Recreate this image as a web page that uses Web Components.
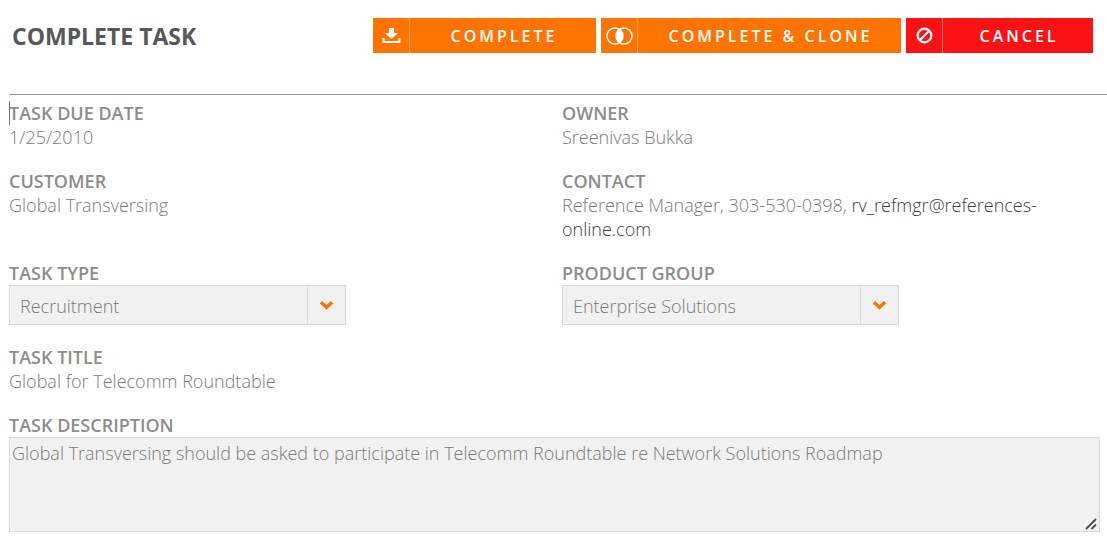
<!DOCTYPE html>
<html lang="en">
<head>
<meta charset="utf-8">
<title>Complete Task</title>
<style>
  body { margin: 0; background: #fff; color: #7c7a7a; font: 300 18px/24px "Open Sans", sans-serif; }
  a { color: #3c4041; text-decoration: none; }
</style>
</head>
<body>
<task-page>
  <task-header slot="header" heading="COMPLETE TASK">
    <action-button icon="download" style="flex: 0 0 223px">COMPLETE</action-button>
    <action-button icon="clone" style="flex: 0 0 300px">COMPLETE &amp; CLONE</action-button>
    <action-button icon="cancel" tone="danger" style="flex: 0 0 187px">CANCEL</action-button>
  </task-header>
  <task-field label="TASK DUE DATE" caret>1/25/2010</task-field>
  <task-field label="OWNER">Sreenivas Bukka</task-field>
  <task-field label="CUSTOMER">Global Transversing</task-field>
  <task-field label="CONTACT">Reference Manager, 303-530-0398, <a href="mailto:rv_refmgr@references-online.com">rv_refmgr@references-online.com</a></task-field>
  <task-select label="TASK TYPE" value="Recruitment"></task-select>
  <task-select label="PRODUCT GROUP" value="Enterprise Solutions"></task-select>
  <task-field label="TASK TITLE" wide>Global for Telecomm Roundtable</task-field>
  <task-notes label="TASK DESCRIPTION" value="Global Transversing should be asked to participate in Telecomm Roundtable re Network Solutions Roadmap" wide></task-notes>
</task-page>
<script>
const labelCss = `.label { display: block; font-weight: 600; color: #8e8c8c; }`;

class Base extends HTMLElement {
  connectedCallback() {
    if (!this.shadowRoot) this.attachShadow({ mode: "open" }).innerHTML = this.render();
  }
  attr(name) { return this.getAttribute(name) || ""; }
}

customElements.define("task-page", class extends Base {
  render() {
    return `<style>
      :host { display: block; padding-left: 9px; }
      main { display: grid; grid-template-columns: 1fr 1fr; column-gap: 8px; row-gap: 20px; padding: 6px 0 8px; border-top: 1px solid #969494; }
      ::slotted([wide]) { grid-column: 1 / -1; }
    </style>
    <slot name="header"></slot>
    <main><slot></slot></main>`;
  }
});

customElements.define("task-header", class extends Base {
  render() {
    return `<style>
      :host { display: flex; align-items: center; justify-content: space-between; padding: 18px 14px 41px 3px; }
      h1 { margin: 0; color: #56595a; font-size: 23px; line-height: 36px; height: 35px; font-weight: 700; white-space: nowrap; }
      .actions { display: flex; gap: 5px; }
    </style>
    <h1>${this.attr("heading")}</h1>
    <div class="actions"><slot></slot></div>`;
  }
});

const icons = {
  download: `<path d="M7 1h5v5h4l-6.500 6L3 6h4z" fill="#fff"/><path d="M1.500 11v4h16v-4" fill="none" stroke="#fff" stroke-width="2"/>`,
  clone: `<g fill="none" stroke="#fff" stroke-width="1.500"><circle cx="9" cy="9" r="8"/><circle cx="18" cy="9" r="8"/></g><path d="M13.500 2.400a8 8 0 0 1 0 13.200a8 8 0 0 1 0-13.200z" fill="#fff"/>`,
  cancel: `<g fill="none" stroke="#fff" stroke-width="2.200"><circle cx="8.500" cy="8.500" r="6.800"/><path d="M4 13l9-9"/></g>`
};
const iconBox = { download: [19, 17], clone: [27, 18], cancel: [17, 17] };

customElements.define("action-button", class extends Base {
  render() {
    const [w, h] = iconBox[this.attr("icon")];
    return `<style>
      :host { display: block; --fill: #ff7300; --rule: #ffac66; }
      :host([tone="danger"]) { --fill: #fb1214; --rule: #fd7272; }
      button { display: flex; width: 100%; height: 35px; padding: 0; border: 0; background: var(--fill); color: #fff; font: 600 16px/36px "Open Sans", sans-serif; letter-spacing: 3px; cursor: pointer; }
      .icon { flex: 0 0 36px; height: 35px; display: flex; align-items: center; justify-content: center; border-right: 1px solid var(--rule); }
      .text { flex: 1; padding-left: 2px; text-align: center; white-space: nowrap; }
    </style>
    <button type="button"><span class="icon"><svg width="${w}" height="${h}" viewBox="0 0 ${w} ${h}" aria-hidden="true">${icons[this.attr("icon")]}</svg></span><span class="text"><slot></slot></span></button>`;
  }
});

customElements.define("task-field", class extends Base {
  render() {
    return `<style>
      :host { display: block; position: relative; }
      ${labelCss}
      .value { max-width: 480px; }
      :host([caret])::before { content: ""; position: absolute; left: 0; top: 0; width: 1px; height: 24px; background: #777; }
    </style>
    <span class="label">${this.attr("label")}</span>
    <div class="value"><slot></slot></div>`;
  }
});

customElements.define("task-select", class extends Base {
  render() {
    return `<style>
      :host { display: block; }
      ${labelCss}
      .box { display: grid; grid-template-columns: 1fr 38px; width: 337px; height: 40px; box-sizing: border-box; border: 1px solid #d8d8d8; background: #f1f1f1; }
      select { grid-area: 1 / 1 / 2 / 3; appearance: none; width: 100%; border: 0; margin: 0; padding: 2px 48px 0 10px; background: none; color: inherit; font: inherit; }
      .arrow { grid-area: 1 / 2; display: flex; align-items: center; justify-content: center; margin-top: 1px; border-left: 1px solid #d8d8d8; pointer-events: none; }
    </style>
    <label class="label" for="s">${this.attr("label")}</label>
    <div class="box">
      <select id="s"><option>${this.attr("value")}</option></select>
      <span class="arrow"><svg width="14" height="10" viewBox="0 0 14 10" aria-hidden="true"><path d="M1 1.200L6.500 6.500l5.500-5.300" fill="none" stroke="#ff7300" stroke-width="3.400"/></svg></span>
    </div>`;
  }
});

customElements.define("task-notes", class extends Base {
  render() {
    return `<style>
      :host { display: block; padding-right: 7px; }
      ${labelCss}
      .box { position: relative; }
      textarea { display: block; box-sizing: border-box; width: 100%; height: 95px; margin: 0; padding: 3px 2px; border: 1px solid #d8d8d8; background: #f1f1f1; color: inherit; font: inherit; resize: vertical; outline: 0; }
      textarea::-webkit-resizer { background: transparent; }
      .grip { position: absolute; right: 3px; bottom: 2px; pointer-events: none; }
    </style>
    <label class="label" for="t">${this.attr("label")}</label>
    <div class="box">
      <textarea id="t">${this.attr("value")}</textarea>
      <svg class="grip" width="12" height="12" viewBox="0 0 12 12" aria-hidden="true"><path d="M1 11L11 1M6.500 11L11 6.500" fill="none" stroke="#4a4a4a" stroke-width="1.800"/></svg>
    </div>`;
  }
});
</script>
</body>
</html>
